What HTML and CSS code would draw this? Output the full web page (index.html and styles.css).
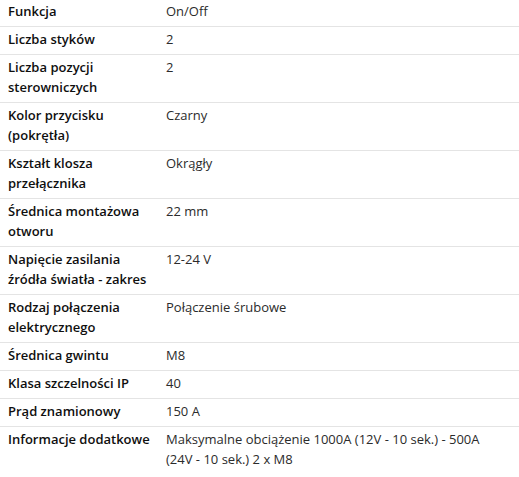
FILE: index.html
```html
<!DOCTYPE html>
<html lang="pl">
<head>
<meta charset="utf-8">
<link rel="stylesheet" href="styles.css">
</head>
<body>
<div class="specs">
  <div class="row first"><div class="label">Funkcja</div><div class="value">On/Off</div></div>
  <div class="row"><div class="label">Liczba styków</div><div class="value">2</div></div>
  <div class="row"><div class="label">Liczba pozycji sterowniczych</div><div class="value">2</div></div>
  <div class="row"><div class="label">Kolor przycisku (pokrętła)</div><div class="value">Czarny</div></div>
  <div class="row"><div class="label">Kształt klosza przełącznika</div><div class="value">Okrągły</div></div>
  <div class="row"><div class="label">Średnica montażowa otworu</div><div class="value">22 mm</div></div>
  <div class="row"><div class="label">Napięcie zasilania źródła światła - zakres</div><div class="value">12-24 V</div></div>
  <div class="row"><div class="label">Rodzaj połączenia elektrycznego</div><div class="value">Połączenie śrubowe</div></div>
  <div class="row"><div class="label">Średnica gwintu</div><div class="value">M8</div></div>
  <div class="row"><div class="label">Klasa szczelności IP</div><div class="value">40</div></div>
  <div class="row"><div class="label">Prąd znamionowy</div><div class="value">150 A</div></div>
  <div class="row last"><div class="label">Informacje dodatkowe</div><div class="value">Maksymalne obciążenie 1000A (12V - 10 sek.) - 500A<br>(24V - 10 sek.) 2 x M8</div></div>
</div>
</body>
</html>
```
FILE: styles.css
```css
html, body {
  margin: 0;
  padding: 0;
  background: #ffffff;
}
body {
  font-family: "Open Sans", "Liberation Sans", sans-serif;
  font-size: 13px;
  line-height: 20px;
}
.specs {
  display: flex;
  flex-direction: column;
  margin-top: -1px;
}
.row {
  display: grid;
  grid-template-columns: 158px 1fr;
  border-bottom: 1px solid #e4e4e4;
}
.row.last {
  border-bottom: none;
}
.label, .value {
  padding: 2px 8px 5px 8px;
}
.label {
  font-weight: 600;
  color: #0f0f0f;
}
.value {
  color: #2b2b2b;
}
```
